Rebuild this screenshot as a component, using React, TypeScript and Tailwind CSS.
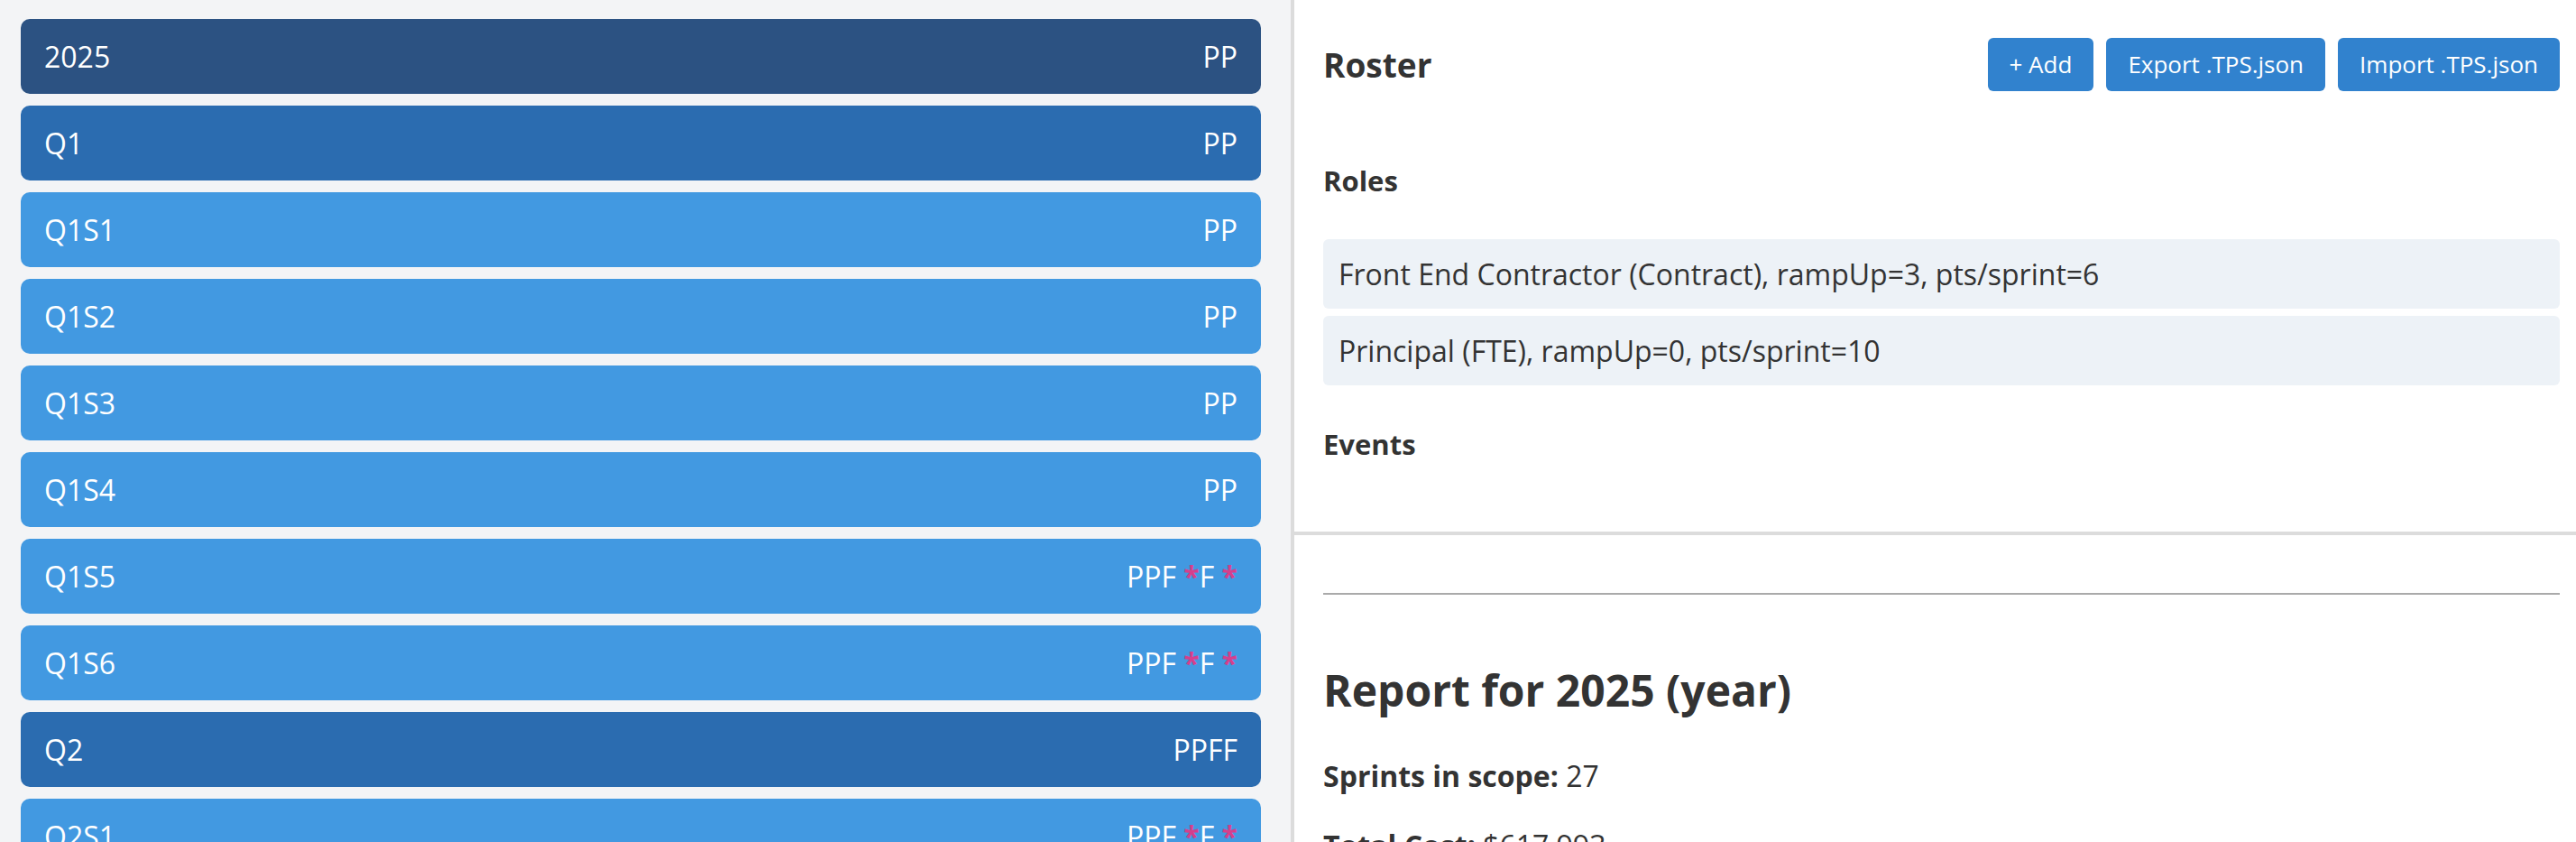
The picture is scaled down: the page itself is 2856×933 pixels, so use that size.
import React from "react";

type Row = { label: string; kind: "year" | "q" | "s"; right: string };

const rows: Row[] = [
  { label: "2025", kind: "year", right: "PP" },
  { label: "Q1", kind: "q", right: "PP" },
  { label: "Q1S1", kind: "s", right: "PP" },
  { label: "Q1S2", kind: "s", right: "PP" },
  { label: "Q1S3", kind: "s", right: "PP" },
  { label: "Q1S4", kind: "s", right: "PP" },
  { label: "Q1S5", kind: "s", right: "PPF *F *" },
  { label: "Q1S6", kind: "s", right: "PPF *F *" },
  { label: "Q2", kind: "q", right: "PPFF" },
  { label: "Q2S1", kind: "s", right: "PPF *F *" },
  { label: "Q2S2", kind: "s", right: "PPF *F *" },
];

function RightText({ text }: { text: string }) {
  return (
    <span className="whitespace-pre">
      {text.split("").map((c, i) =>
        c === "*" ? (
          <span key={i} className="font-bold text-[#d53f8c]">
            *
          </span>
        ) : (
          <span key={i}>{c}</span>
        )
      )}
    </span>
  );
}

function rowBg(kind: Row["kind"]) {
  if (kind === "year") return "bg-[#2c5282]";
  if (kind === "q") return "bg-[#2b6cb0]";
  return "bg-[#4299e1]";
}

export default function App() {
  return (
    <div className="flex h-[933px] w-full overflow-hidden font-['Open_Sans',sans-serif] text-[#333333]">
      {/* Left: timeline list */}
      <div className="w-[1435px] shrink-0 border-r-4 border-[#dcdcdc] bg-[#f3f4f6] pl-[23px] pr-[33px] pt-[21px]">
        <div className="flex flex-col gap-[13px]">
          {rows.map((r) => (
            <div
              key={r.label}
              className={`${rowBg(r.kind)} flex h-[83px] shrink-0 items-center justify-between rounded-[10px] px-[26px] text-[32px] leading-[48px] text-white`}
            >
              <span>{r.label}</span>
              <RightText text={r.right} />
            </div>
          ))}
        </div>
      </div>

      {/* Right: roster + report */}
      <div className="flex min-w-0 flex-1 flex-col">
        <div className="h-[593px] shrink-0 border-b-4 border-[#dcdcdc] pl-[32px] pr-[18px]">
          <div className="mt-[42px] flex h-[59px] items-center justify-between">
            <h2 className="text-[37px] font-bold leading-[44px]">Roster</h2>
            <div className="flex gap-[14px]">
              <button className="h-[59px] rounded-[6px] bg-[#3182ce] px-[24px] text-[26px] text-white">
                + Add
              </button>
              <button className="h-[59px] rounded-[6px] bg-[#3182ce] px-[24px] text-[26px] text-white">
                Export .TPS.json
              </button>
              <button className="h-[59px] rounded-[6px] bg-[#3182ce] px-[24px] text-[26px] text-white">
                Import .TPS.json
              </button>
            </div>
          </div>

          <h3 className="mt-[78px] text-[31px] font-bold leading-[42px]">Roles</h3>
          <div className="mt-[44px] flex flex-col gap-[8px]">
            <div className="flex h-[77px] items-center rounded-[6px] bg-[#edf2f7] px-[17px] text-[32px]">
              Front End Contractor (Contract), rampUp=3, pts/sprint=6
            </div>
            <div className="flex h-[77px] items-center rounded-[6px] bg-[#edf2f7] px-[17px] text-[32px]">
              Principal (FTE), rampUp=0, pts/sprint=10
            </div>
          </div>

          <h3 className="mt-[44px] text-[31px] font-bold leading-[42px]">Events</h3>
        </div>

        <div className="flex-1 pl-[32px] pr-[18px]">
          <div className="mt-[64px] border-t-2 border-[#aaaaaa]" />
          <h1 className="mt-[76px] text-[48px] font-bold leading-[59px]">Report for 2025 (year)</h1>
          <p className="mt-[42px] text-[32px] leading-[48px]">
            <span className="font-bold">Sprints in scope:</span> 27
          </p>
          <p className="mt-[29px] text-[32px] leading-[48px]">
            <span className="font-bold">Total Cost:</span> $617,993
          </p>
        </div>
      </div>
    </div>
  );
}
